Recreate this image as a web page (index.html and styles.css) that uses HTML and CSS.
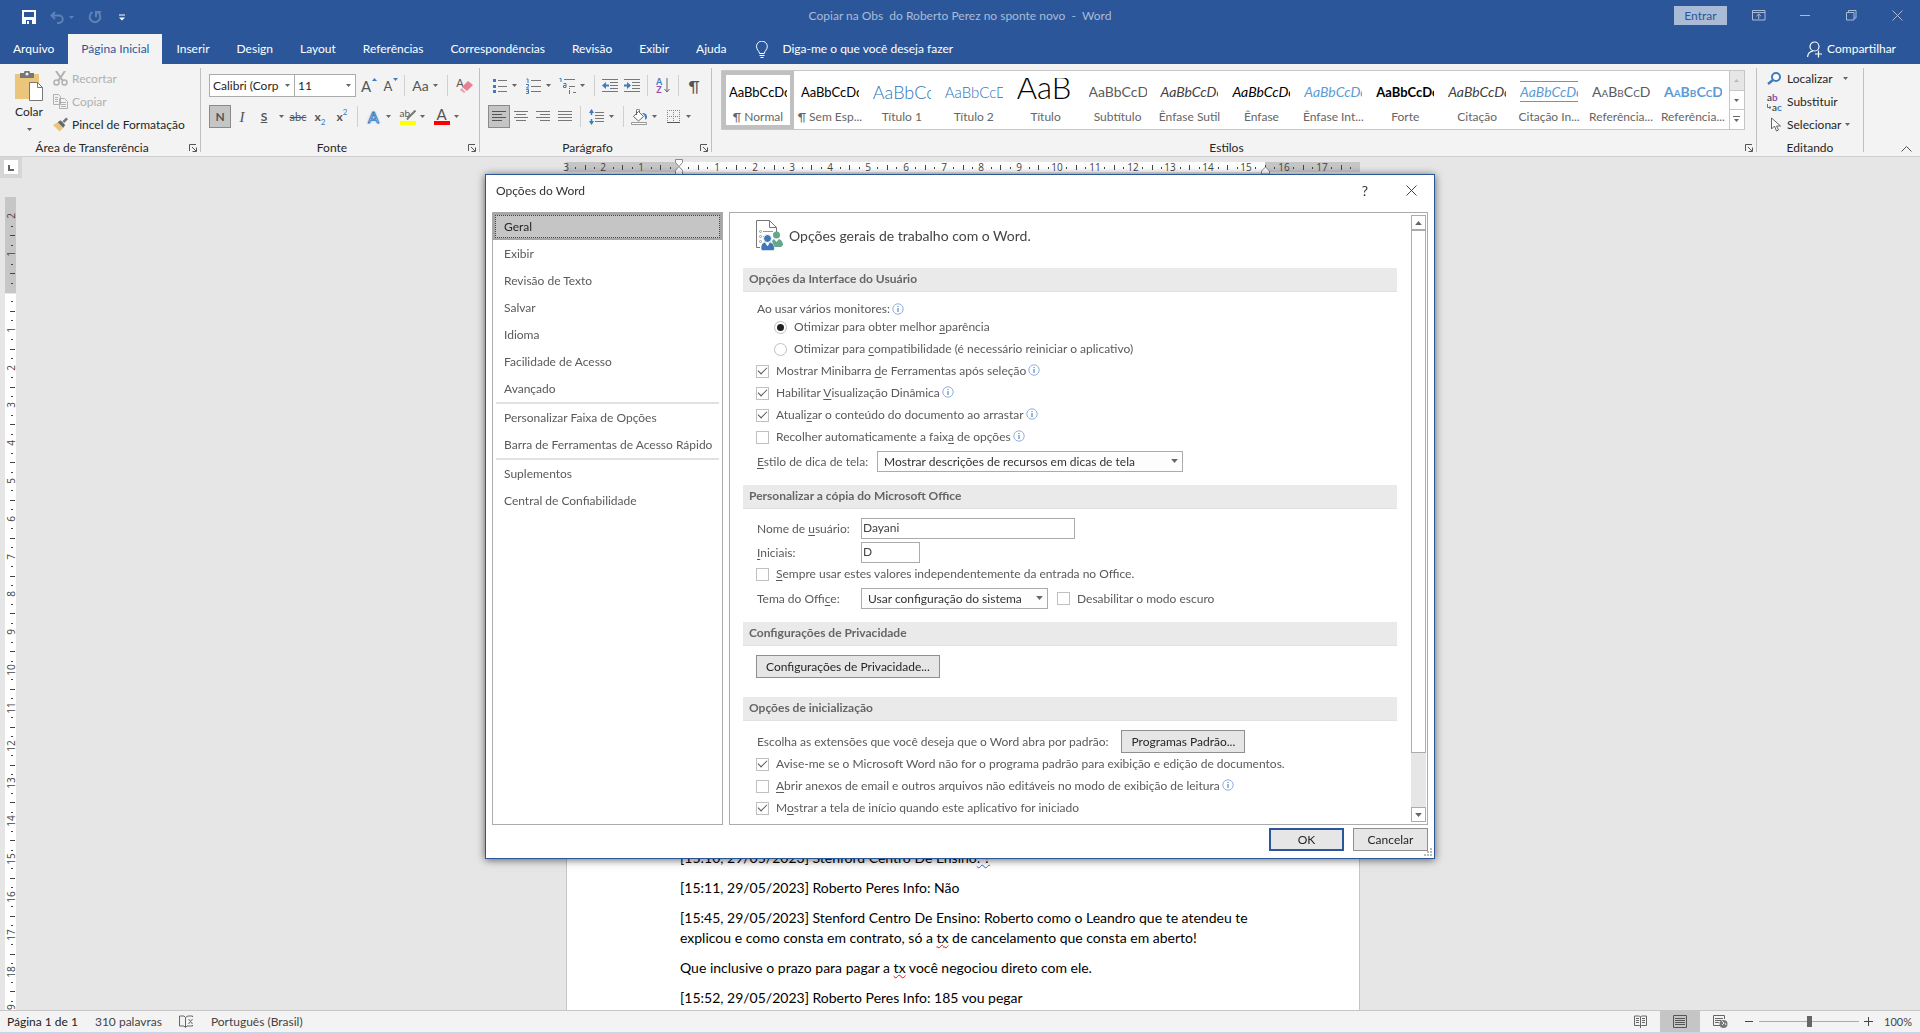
FILE: index.html
```html
<!DOCTYPE html>
<html lang="pt-BR">
<head>
  <meta charset="UTF-8">
  <meta name="viewport" content="width=device-width, initial-scale=1">
  <title>Copiar na Obs do Roberto Perez no sponte novo - Word</title>
  <link rel="stylesheet" href="styles.css">
</head>
<body>

<!-- símbolos reutilizados -->
<svg class="defs" aria-hidden="true">
  <symbol id="arrow" viewBox="0 0 5 3"><path d="M0 0h5L2.500 3z" fill="currentColor"/></symbol>
  <symbol id="info" viewBox="0 0 12 12"><circle cx="6" cy="6" r="5.200" fill="#fff" stroke="#8db0e0"/><path d="M6 5v4M6 3v1" stroke="#3a6fb5"/></symbol>
  <symbol id="launch" viewBox="0 0 8 8"><path d="M.5 7V.5H7M3 3l4 4M7.500 3.500v4h-4" fill="none" stroke="#555"/></symbol>
</svg>

<div class="app">
<header class="titlebar">
  <div class="quick">
    <button class="tb" aria-label="Salvar"><svg width="14" height="14" viewBox="0 0 14 14"><path d="M1 1h12v12H1z" fill="none" stroke="#fff" stroke-width="2"/><path d="M1 7h12v6H1z" fill="#fff"/><path d="M4 10h6v4H4z" fill="#2b579a"/><path d="M5 11h2v3H5z" fill="#fff"/></svg></button>
    <button class="split faded" aria-label="Desfazer"><svg width="14" height="13" viewBox="0 0 14 13"><path d="M5 1L1.500 4.500 5 8M2 4.500h7a3.500 3.500 0 0 1 0 7.500H7" fill="none" stroke="currentColor" stroke-width="2"/></svg><svg class="arr"><use href="#arrow"/></svg></button>
    <button class="tb faded" aria-label="Refazer"><svg width="14" height="14" viewBox="0 0 14 14"><path d="M4.500 2.200A5.300 5.300 0 1 0 9.500 2.200M8 7V2h5" fill="none" stroke="currentColor" stroke-width="2"/></svg></button>
    <button class="tb" aria-label="Personalizar barra"><svg width="6" height="7" viewBox="0 0 6 7"><path d="M0 1h6" stroke="#fff" /><path d="M0 3.500h6L3 6.500z" fill="#fff"/></svg></button>
  </div>
  <div class="doc-title">Copiar na Obs  do Roberto Perez no sponte novo  -  Word</div>
  <div class="window-buttons">
    <button class="signin">Entrar</button>
    <button class="win" aria-label="Opções de exibição da faixa"><svg width="14" height="11" viewBox="0 0 14 11"><path d="M.5.5h12.500v9.500H.5zM.5 2.500H13M6.750 9V4M4.500 6.200L6.750 4 9 6.200" fill="none" stroke="currentColor"/></svg></button>
    <button class="win" aria-label="Minimizar"><svg width="10" height="11" viewBox="0 0 10 11"><path d="M0 5.500h10" stroke="currentColor"/></svg></button>
    <button class="win" aria-label="Restaurar"><svg width="11" height="11" viewBox="0 0 11 11"><path d="M.5 2.500h7.500v7.500H.5zM2.500 2.500V.5H10v7.500H8" fill="none" stroke="currentColor"/></svg></button>
    <button class="win" aria-label="Fechar"><svg width="11" height="11" viewBox="0 0 11 11"><path d="M.5.5l10 10M10.500.5l-10 10" stroke="currentColor"/></svg></button>
  </div>
</header>

<nav class="tabs">
  <button>Arquivo</button>
  <button class="active">Página Inicial</button>
  <button>Inserir</button>
  <button>Design</button>
  <button>Layout</button>
  <button>Referências</button>
  <button>Correspondências</button>
  <button>Revisão</button>
  <button>Exibir</button>
  <button>Ajuda</button>
  <button class="tell"><svg width="12" height="17" viewBox="0 0 12 17"><path d="M3.500 12.500c0-2.500-3-3.500-3-7a5.300 5.300 0 0 1 10.800 0c0 3.500-3 4.500-3 7zM3.500 14.500h5M4.500 16.500h3" fill="none" stroke="#fff"/></svg>Diga-me o que você deseja fazer</button>
  <button class="share"><svg width="15" height="17" viewBox="0 0 15 17"><circle cx="7.500" cy="5.500" r="4.500" fill="none" stroke="#fff" stroke-width="1.200"/><path d="M.6 16C.8 12.500 3 10.500 6 10M11.500 9.500v7M8 13h7" fill="none" stroke="#fff" stroke-width="1.200"/></svg>Compartilhar</button>
</nav>

<section class="ribbon">
  <div class="group clipboard">
    <div class="controls">
      <button class="paste">
        <svg width="28" height="30" viewBox="0 0 28 30"><path d="M0 3h24v25H0z" fill="#ecc57c"/><path d="M5 2h4a3 3 0 0 1 6 0h4v5H5z" fill="#777"/><circle cx="12" cy="3" r="1.500" fill="#f3f3f3"/><path d="M14.500 11.500h8l5 5v13h-13z" fill="#fff" stroke="#777"/><path d="M22.500 11.500v5h5" fill="none" stroke="#777"/></svg>
        <span>Colar</span>
        <svg class="arr"><use href="#arrow"/></svg>
      </button>
      <div class="stack">
        <button class="row off"><svg width="15" height="15" viewBox="0 0 15 15"><path d="M3 0l7 10M12 0L5 10" stroke="#b1b1b1" stroke-width="2"/><circle cx="3.500" cy="11.500" r="2.500" fill="none" stroke="#b1b1b1" stroke-width="1.500"/><circle cx="11.500" cy="11.500" r="2.500" fill="none" stroke="#b1b1b1" stroke-width="1.500"/></svg>Recortar</button>
        <button class="row off"><svg width="15" height="15" viewBox="0 0 15 15"><path d="M.5.5h5l2 2v8h-7zM6.500 4.500h5l3 3v7h-8z" fill="#f3f3f3" stroke="#b1b1b1"/><path d="M2 3.500h3M2 5.500h3M2 7.500h3M8 8.500h5M8 10.500h5M8 12.500h5" stroke="#b1b1b1"/></svg>Copiar</button>
        <button class="row"><svg width="15" height="15" viewBox="0 0 16 15"><path d="M0 8l5-3 6 6-4 4z" fill="#ecc57c"/><path d="M5 5l3-2 5 5-2 3z" fill="#666"/><path d="M10 4l4-4 2 2-4 4z" fill="#777"/></svg>Pincel de Formatação</button>
      </div>
    </div>
    <div class="caption">Área de Transferência<button class="launcher" aria-label="Mais opções"><svg width="8" height="8"><use href="#launch"/></svg></button></div>
  </div>

  <div class="group font">
    <div class="controls column">
      <div class="line">
        <div class="combo"><select aria-label="Fonte"><option>Calibri (Corp</option></select><svg class="arr"><use href="#arrow"/></svg></div>
        <div class="combo size"><select aria-label="Tamanho"><option>11</option></select><svg class="arr"><use href="#arrow"/></svg></div>
        <button class="tb grow" aria-label="Aumentar fonte"><span>A</span><svg width="5" height="3" viewBox="0 0 5 3"><path d="M0 3h5L2.500 0z" fill="#3c7cbf"/></svg></button>
        <button class="tb grow less" aria-label="Diminuir fonte"><span>A</span><svg width="5" height="3" viewBox="0 0 5 3"><path d="M0 0h5L2.500 3z" fill="#3c7cbf"/></svg></button>
        <i class="sep"></i>
        <button class="split"><span class="aa">Aa</span><svg class="arr"><use href="#arrow"/></svg></button>
        <i class="sep"></i>
        <button class="tb eraser" aria-label="Limpar formatação"><span>A</span><svg width="13" height="12" viewBox="0 0 13 12"><path d="M8 0l5 4-6 6-5-4z" fill="#e8808f"/><path d="M1.500 7l4 4-1.500 1L0 9z" fill="#ef9fab"/></svg></button>
      </div>
      <div class="line">
        <button class="tb pressed"><b>N</b></button>
        <button class="tb serif"><em>I</em></button>
        <button class="tb ul"><b>S</b></button>
        <button class="drop" aria-label="Estilo de sublinhado"><svg class="arr"><use href="#arrow"/></svg></button>
        <button class="tb strike"><s>abc</s></button>
        <button class="tb script"><b>x</b><sub>2</sub></button>
        <button class="tb script"><b>x</b><sup>2</sup></button>
        <i class="sep"></i>
        <button class="split"><span class="glow">A</span><svg class="arr"><use href="#arrow"/></svg></button>
        <button class="split"><span class="mark">ab<svg width="10" height="10" viewBox="0 0 10 10"><path d="M9.500.5L3 7 1 9.500" stroke="#777" stroke-width="2" fill="none"/></svg></span><svg class="arr"><use href="#arrow"/></svg></button>
        <button class="split"><span class="color">A</span><svg class="arr"><use href="#arrow"/></svg></button>
      </div>
    </div>
    <div class="caption">Fonte<button class="launcher" aria-label="Mais opções"><svg width="8" height="8"><use href="#launch"/></svg></button></div>
  </div>

  <div class="group paragraph">
    <div class="controls column">
      <div class="line">
        <button class="split" aria-label="Marcadores"><svg width="14" height="15" viewBox="0 0 14 15"><path d="M5 2.500h9M5 8.500h9M5 13.500h9" stroke="#777"/><path d="M0 1h3v3H0zM0 7h3v3H0zM0 12h3v3H0z" fill="#3c7cbf"/></svg><svg class="arr"><use href="#arrow"/></svg></button>
        <button class="split" aria-label="Numeração"><svg width="15" height="16" viewBox="0 0 15 16"><path d="M5 2.500h10M5 8.500h10M5 13.500h10" stroke="#777"/><path d="M.5 1H2v4M0 6.500h2.500v1.500L.5 10h2.500M0 11.500h2.500v4H0M.5 13.500h2" stroke="#3c7cbf" fill="none"/></svg><svg class="arr"><use href="#arrow"/></svg></button>
        <button class="split" aria-label="Lista de vários níveis"><svg width="17" height="16" viewBox="0 0 17 16"><path d="M5 1.500h11M10 8.500h6M14 14.500h3" stroke="#777"/><path d="M.5.5H2V4M4.500 5.500H7v4H4.500V7.500H7M10.500 10v1M10.500 12v4" stroke="#3c7cbf" fill="none"/></svg><svg class="arr"><use href="#arrow"/></svg></button>
        <i class="sep"></i>
        <button class="tb" aria-label="Diminuir recuo"><svg width="16" height="14" viewBox="0 0 16 14"><path d="M0 .5h16M8 3.500h8M8 6.500h8M8 9.500h8M0 12.500h16" stroke="#777"/><path d="M7 6.500H2" stroke="#3c7cbf" stroke-width="2"/><path d="M0 6.500L4 3v7z" fill="#3c7cbf"/></svg></button>
        <button class="tb" aria-label="Aumentar recuo"><svg width="16" height="14" viewBox="0 0 16 14"><path d="M0 .5h16M8 3.500h8M8 6.500h8M8 9.500h8M0 12.500h16" stroke="#777"/><path d="M0 6.500h5" stroke="#3c7cbf" stroke-width="2"/><path d="M7 6.500L3 3v7z" fill="#3c7cbf"/></svg></button>
        <i class="sep"></i>
        <button class="tb sort" aria-label="Classificar"><span>A<i>Z</i></span><svg width="6" height="15" viewBox="0 0 6 15"><path d="M3 0v14M.5 11L3 14l2.500-3" stroke="#666" fill="none"/></svg></button>
        <i class="sep"></i>
        <button class="tb pilcrow">¶</button>
      </div>
      <div class="line">
        <button class="tb pressed" aria-label="Alinhar à esquerda"><svg width="14" height="12" viewBox="0 0 14 12"><path d="M0 .5h14M0 3.500h10M0 6.500h14M0 9.500h10" stroke="#555"/></svg></button>
        <button class="tb" aria-label="Centralizar"><svg width="14" height="12" viewBox="0 0 14 12"><path d="M0 .5h14M2 3.500h10M0 6.500h14M2 9.500h10" stroke="#777"/></svg></button>
        <button class="tb" aria-label="Alinhar à direita"><svg width="14" height="12" viewBox="0 0 14 12"><path d="M0 .5h14M4 3.500h10M0 6.500h14M4 9.500h10" stroke="#777"/></svg></button>
        <button class="tb" aria-label="Justificar"><svg width="14" height="12" viewBox="0 0 14 12"><path d="M0 .5h14M0 3.500h14M0 6.500h14M0 9.500h14" stroke="#777"/></svg></button>
        <i class="sep"></i>
        <button class="split" aria-label="Espaçamento"><svg width="15" height="16" viewBox="0 0 15 16"><path d="M6 3.500h9M6 6.500h9M6 9.500h9M6 12.500h9" stroke="#777"/><path d="M2.500 1v5M2.500 10v5" stroke="#3c7cbf" stroke-width="1.500"/><path d="M0 4l2.500-4L5 4zM0 12l2.500 4L5 12z" fill="#3c7cbf"/></svg><svg class="arr"><use href="#arrow"/></svg></button>
        <i class="sep"></i>
        <button class="split" aria-label="Sombreamento"><svg width="17" height="16" viewBox="0 0 17 16"><path d="M2.500 7.500l5-5 5 5-5 4.500zM5.500 6V1.500a1 1 0 0 1 3 0V4" fill="#fff" stroke="#666"/><path d="M11 4c3 0 5 1 5 4 0 2-2 4-2 1s-1-3-3-5z" fill="#3c7cbf"/><path d="M.5 13.500h15v2H.5z" fill="#fff" stroke="#999"/></svg><svg class="arr"><use href="#arrow"/></svg></button>
        <button class="split" aria-label="Bordas"><svg width="13" height="14" viewBox="0 0 13 14"><path d="M.5 0v12M6.500 0v12M12.500 0v12M0 .5h13M0 6.500h13" stroke="#888" stroke-dasharray="1 1"/><path d="M0 12.500h13" stroke="#555"/></svg><svg class="arr"><use href="#arrow"/></svg></button>
      </div>
    </div>
    <div class="caption">Parágrafo<button class="launcher" aria-label="Mais opções"><svg width="8" height="8"><use href="#launch"/></svg></button></div>
  </div>

  <div class="group styles">
    <div class="gallery">
      <button class="style selected"><span class="sample">AaBbCcDc</span><span>¶ Normal</span></button>
      <button class="style"><span class="sample">AaBbCcDc</span><span>¶ Sem Esp...</span></button>
      <button class="style"><span class="sample h1">AaBbCc</span><span>Título 1</span></button>
      <button class="style"><span class="sample h2">AaBbCcD</span><span>Título 2</span></button>
      <button class="style"><span class="sample title">AaB</span><span>Título</span></button>
      <button class="style"><span class="sample subtitle">AaBbCcD</span><span>Subtítulo</span></button>
      <button class="style"><span class="sample subtle">AaBbCcDc</span><span>Ênfase Sutil</span></button>
      <button class="style"><span class="sample italic">AaBbCcDc</span><span>Ênfase</span></button>
      <button class="style"><span class="sample italic accent">AaBbCcDc</span><span>Ênfase Int...</span></button>
      <button class="style"><span class="sample strong">AaBbCcDc</span><span>Forte</span></button>
      <button class="style"><span class="sample subtle">AaBbCcDc</span><span>Citação</span></button>
      <button class="style"><span class="sample italic accent ruled">AaBbCcDc</span><span>Citação In...</span></button>
      <button class="style"><span class="sample caps">AaBbCcDd</span><span>Referência...</span></button>
      <button class="style"><span class="sample caps accent strong">AaBbCcDd</span><span>Referência...</span></button>
      <div class="gallery-nav">
        <button disabled aria-label="Anterior"><svg class="arr up"><use href="#arrow"/></svg></button>
        <button aria-label="Próxima"><svg class="arr"><use href="#arrow"/></svg></button>
        <button aria-label="Mais"><svg width="7" height="7" viewBox="0 0 7 7"><path d="M0 .5h7" stroke="#666"/><path d="M1 3h5L3.500 6z" fill="#666"/></svg></button>
      </div>
    </div>
    <div class="caption">Estilos<button class="launcher" aria-label="Mais opções"><svg width="8" height="8"><use href="#launch"/></svg></button></div>
  </div>

  <div class="group editing">
    <div class="stack">
      <button class="row"><svg width="16" height="13" viewBox="0 0 16 13"><circle cx="9" cy="5" r="4" fill="#fff" stroke="#3c7cbf" stroke-width="2"/><path d="M6 8l-5 4" stroke="#3c7cbf" stroke-width="2.500"/></svg>Localizar<svg class="arr far"><use href="#arrow"/></svg></button>
      <button class="row"><span class="swap"><i>a<b>b</b></i><i class="to"><svg width="4" height="5" viewBox="0 0 4 5"><path d="M.5 0v3.500H4M2.500 2L4 3.500 2.500 5" fill="none" stroke="#3c7cbf"/></svg>a<u>c</u></i></span>Substituir</button>
      <button class="row"><svg width="16" height="15" viewBox="0 0 16 15"><path d="M4.500 1v11l3-3 2 5 2-1-2-4h4z" fill="#fff" stroke="#666"/></svg>Selecionar<svg class="arr"><use href="#arrow"/></svg></button>
    </div>
    <div class="caption">Editando</div>
  </div>
  <button class="collapse" aria-label="Recolher a faixa"><svg width="11" height="6" viewBox="0 0 11 6"><path d="M.5 5.500l5-5 5 5" fill="none" stroke="#555"/></svg></button>
</section>

<main class="workspace">
  <div class="side">
    <div class="tabstop"><svg width="14" height="14" viewBox="0 0 14 14"><path d="M0 0h14v14H0z" fill="#fff"/><path d="M5 5v5h5" fill="none" stroke="#666" stroke-width="2"/></svg></div>
    <svg class="vruler" id="vruler"></svg>
  </div>
  <div class="canvas">
    <svg class="hruler" id="hruler"></svg>
    <article class="page">
      <p>[15:10, 29/05/2023] Stenford Centro De Ensino<span class="grammar">: ?</span></p>
      <p>[15:11, 29/05/2023] Roberto Peres Info: Não</p>
      <p>[15:45, 29/05/2023] Stenford Centro De Ensino: Roberto como o Leandro que te atendeu te<br>explicou e como consta em contrato, só a <span class="spell">tx</span> de cancelamento que consta em aberto!</p>
      <p>Que inclusive o prazo para pagar a <span class="spell">tx</span> você negociou direto com ele.</p>
      <p>[15:52, 29/05/2023] Roberto Peres Info: 185 vou pegar</p>
    </article>
  </div>
</main>

<footer class="status">
  <span class="pages">Página 1 de 1</span>
  <span>310 palavras</span>
  <svg width="15" height="13" viewBox="0 0 15 13"><path d="M8 1.500L6.500 2.500 5 1H.5v10H5l1.500 1.500L8 11h5.500v-1M6.500 2.500v10M8 1.500L9 1h4.500v1M9.500 4l4 5M13.500 4l-4 5" fill="none" stroke="#666"/></svg>
  <span>Português (Brasil)</span>
  <div class="views">
    <button aria-label="Modo de leitura"><svg width="13" height="13" viewBox="0 0 13 13"><path d="M6.500 2L5.500 1H.5v9.500h5l1 1 1-1h5V1h-5zM6.500 2v11" fill="none" stroke="#666"/><path d="M2 3.500h3M2 5.500h3M2 7.500h3M8 3.500h3M8 5.500h3M8 7.500h3" stroke="#666"/></svg></button>
    <button class="on" aria-label="Layout de impressão"><svg width="14" height="13" viewBox="0 0 14 13"><path d="M.5.5h13v12H.5zM2 3.500h10M2 5.500h10M2 7.500h10M2 9.500h10" fill="none" stroke="#555"/></svg></button>
    <button aria-label="Layout da Web"><svg width="15" height="14" viewBox="0 0 15 14"><path d="M7 10.500H.5V.5h11V4M2 3.500h8M2 5.500h6M2 7.500h4" fill="none" stroke="#666"/><circle cx="10.500" cy="9" r="4" fill="#777"/><path d="M9 6l2 2-2 2M12 8l1 2" stroke="#eee" fill="none"/></svg></button>
  </div>
  <div class="zoom">
    <button aria-label="Reduzir"><svg width="9" height="9" viewBox="0 0 9 9"><path d="M0 4.500h8" stroke="#444"/></svg></button>
    <input type="range" min="0" max="100" value="50" aria-label="Zoom">
    <button aria-label="Ampliar"><svg width="9" height="9" viewBox="0 0 9 9"><path d="M0 4.500h9M4.500 0v9" stroke="#444"/></svg></button>
    <span>100%</span>
  </div>
</footer>
</div>

<div class="overlay">
<form class="dialog" role="dialog" aria-labelledby="dlg-title">
  <div class="dialog-title">
    <span id="dlg-title">Opções do Word</span>
    <button type="button" class="help">?</button>
    <button type="button" aria-label="Fechar"><svg width="11" height="11" viewBox="0 0 11 11"><path d="M.5.5l10 10M10.500.5l-10 10" stroke="#444"/></svg></button>
  </div>
  <div class="panes">
    <nav class="categories">
      <a href="#" class="current"><span>Geral</span></a>
      <a href="#">Exibir</a>
      <a href="#">Revisão de Texto</a>
      <a href="#">Salvar</a>
      <a href="#">Idioma</a>
      <a href="#">Facilidade de Acesso</a>
      <a href="#">Avançado</a>
      <hr>
      <a href="#">Personalizar Faixa de Opções</a>
      <a href="#">Barra de Ferramentas de Acesso Rápido</a>
      <hr>
      <a href="#">Suplementos</a>
      <a href="#">Central de Confiabilidade</a>
    </nav>
    <div class="content">
      <div class="options">
        <div class="intro">
          <svg width="28" height="31" viewBox="0 0 28 31"><path d="M4 27.500H.5V.5h13l7 7V12M13.500.5v7h7" fill="none" stroke="#777"/><g fill="none" stroke="#999"><circle cx="4.500" cy="11.500" r="1"/><circle cx="4.500" cy="16.500" r="1"/><circle cx="4.500" cy="21.500" r="1"/><path d="M7 11.500h10M7 16.500h2"/></g><circle cx="20.500" cy="15" r="3.500" fill="#67a58c"/><path d="M16 21l2-2 2.500 3 2.500-3c3 1 4 4 4 6l-2 2h-7z" fill="#67a58c"/><circle cx="11.500" cy="18.500" r="4" fill="#3f78b5" stroke="#fff"/><path d="M5 29c0-4 1-6 4-7l2.500 4 2.500-4c3 1 4.500 3 4.500 7l-1 1.500H6z" fill="#3f78b5" stroke="#fff" stroke-width=".5"/></svg>
          <span>Opções gerais de trabalho com o Word.</span>
        </div>

        <h3>Opções da Interface do Usuário</h3>
        <div class="body">
          <div class="first">Ao usar vários monitores:<svg class="info"><use href="#info"/></svg></div>
          <label class="check indent"><input type="radio" name="monitor" checked><span>Otimizar para obter melhor <u>a</u>parência</span></label>
          <label class="check indent"><input type="radio" name="monitor"><span>Otimizar para <u>c</u>ompatibilidade (é necessário reiniciar o aplicativo)</span></label>
          <label class="check"><input type="checkbox" checked><span>Mostrar Minibarra <u>d</u>e Ferramentas após seleção</span><svg class="info"><use href="#info"/></svg></label>
          <label class="check"><input type="checkbox" checked><span>Habilitar <u>V</u>isualização Dinâmica</span><svg class="info"><use href="#info"/></svg></label>
          <label class="check"><input type="checkbox" checked><span>Atuali<u>z</u>ar o conteúdo do documento ao arrastar</span><svg class="info"><use href="#info"/></svg></label>
          <label class="check"><input type="checkbox"><span>Recolher automaticamente a faix<u>a</u> de opções</span><svg class="info"><use href="#info"/></svg></label>
          <div class="field wide">
            <label for="tip"><u>E</u>stilo de dica de tela:</label>
            <div class="select tip"><select id="tip"><option>Mostrar descrições de recursos em dicas de tela</option></select><svg class="arr"><use href="#arrow"/></svg></div>
          </div>
        </div>

        <h3>Personalizar a cópia do Microsoft Office</h3>
        <div class="body">
          <div class="field"><label for="user">Nome de <u>u</u>suário:</label><input type="text" id="user" value="Dayani"></div>
          <div class="field"><label for="initials"><u>I</u>niciais:</label><input type="text" id="initials" class="short" value="D"></div>
          <label class="check"><input type="checkbox"><span><u>S</u>empre usar estes valores independentemente da entrada no Office.</span></label>
          <div class="field">
            <label for="theme">Tema do Offi<u>c</u>e:</label>
            <div class="select theme"><select id="theme"><option>Usar configuração do sistema</option></select><svg class="arr"><use href="#arrow"/></svg></div>
            <label class="check"><input type="checkbox"><span>Desabilitar o modo escuro</span></label>
          </div>
        </div>

        <h3>Configurações de Privacidade</h3>
        <div class="body roomy">
          <button type="button" class="btn">Configurações de Privacidade...</button>
        </div>

        <h3>Opções de inicialização</h3>
        <div class="body">
          <div class="defaults"><span>Escolha as extensões que você deseja que o Word abra por padrão:</span><button type="button" class="btn">Programas Padrão...</button></div>
          <label class="check"><input type="checkbox" checked><span>Avise-me se o Microsoft Word não for o programa padrão para exibição e edição de documentos.</span></label>
          <label class="check"><input type="checkbox"><span><u>A</u>brir anexos de email e outros arquivos não editáveis no modo de exibição de leitura</span><svg class="info"><use href="#info"/></svg></label>
          <label class="check"><input type="checkbox" checked><span>M<u>o</u>strar a tela de início quando este aplicativo for iniciado</span></label>
        </div>
      </div>
      <div class="scrollbar">
        <button type="button" aria-label="Rolar para cima"><svg class="arr up"><use href="#arrow"/></svg></button>
        <div class="thumb"></div>
        <button type="button" aria-label="Rolar para baixo"><svg class="arr"><use href="#arrow"/></svg></button>
      </div>
    </div>
  </div>
  <div class="actions">
    <button type="button" class="btn primary">OK</button>
    <button type="button" class="btn">Cancelar</button>
  </div>
  <svg class="grip" width="8" height="8" viewBox="0 0 8 8"><path d="M6 0h2v2H6zM3 3h2v2H3zM6 3h2v2H6zM0 6h2v2H0zM3 6h2v2H3zM6 6h2v2H6z" fill="#bbb"/></svg>
</form>
</div>

<script src="rulers.js"></script>
</body>
</html>
```
FILE: styles.css
```css
* {
  box-sizing: border-box;
}
body {
  margin: 0;
  font-family: Lato, "Open Sans", sans-serif;
  font-size: 12px;
  line-height: 16px;
  color: #262626;
}
button, input, select {
  font: inherit;
  color: inherit;
  margin: 0;
  padding: 0;
  border: 0;
  background: none;
}
svg {
  display: block;
  flex: none;
}
.defs {
  position: absolute;
  width: 0;
  height: 0;
}
.arr {
  width: 5px;
  height: 3px;
  color: #666;
}
.arr.up {
  transform: rotate(180deg);
}
.app {
  height: 100vh;
  display: flex;
  flex-direction: column;
  overflow: hidden;
  background: #e6e6e6;
}

/* barra de título */
.titlebar {
  height: 34px;
  display: grid;
  grid-template-columns: 1fr auto 1fr;
  background: #2b579a;
  color: #a9bbd7;
}
.quick {
  display: flex;
  align-items: center;
  gap: 5px;
  padding-left: 18px;
}
.quick .faded, .quick .faded .arr {
  color: #5f82b6;
}
.doc-title {
  white-space: pre;
  line-height: 32px;
}
.window-buttons {
  display: flex;
  justify-content: flex-end;
}
.win {
  width: 46px;
  height: 30px;
  display: flex;
  align-items: center;
  justify-content: center;
}
.signin {
  width: 53px;
  height: 19px;
  margin: 6px 9px 0 0;
  background: #a9bbd7;
  color: #2b579a;
}

/* guias */
.tabs {
  height: 30px;
  display: flex;
  gap: 1px;
  background: #2b579a;
}
.tabs button {
  padding: 0 13px;
  color: #fff;
  display: flex;
  align-items: center;
  gap: 14px;
}
.tabs .active {
  background: #f3f3f3;
  color: #2b579a;
}
.tabs .tell {
  padding-left: 16px;
}
.tabs .share {
  margin-left: auto;
  padding-right: 24px;
  gap: 5px;
}

/* faixa de opções */
.ribbon {
  height: 93px;
  display: flex;
  padding-top: 4px;
  background: #f3f3f3;
  border-bottom: 1px solid #d0d0d0;
}
.group {
  height: 84px;
  display: flex;
  flex-direction: column;
  justify-content: space-between;
  border-right: 1px solid #c0c0c0;
}
.clipboard {
  width: 201px;
}
.font {
  width: 279px;
  padding-left: 8px;
}
.paragraph {
  width: 232px;
  padding-left: 8px;
}
.styles {
  flex: 1;
  min-width: 0;
  padding-left: 9px;
}
.editing {
  width: 107px;
}
.controls {
  display: flex;
}
.controls.column {
  flex-direction: column;
  gap: 8px;
  padding-top: 6px;
}
.line {
  display: flex;
  align-items: center;
  height: 23px;
}
.caption {
  height: 17px;
  margin-bottom: -4px;
  padding-right: 24px;
  display: flex;
  align-items: center;
  justify-content: center;
  position: relative;
}
.clipboard .caption {
  padding-right: 16px;
}
.editing .caption {
  padding-right: 0;
}
.launcher {
  position: absolute;
  right: 3px;
  top: 5px;
}
.stack {
  display: flex;
  flex-direction: column;
  margin-top: -1px;
}
.row {
  height: 23px;
  display: flex;
  align-items: center;
  gap: 4px;
  white-space: nowrap;
}
.row.off {
  color: #b1b1b1;
}
.paste {
  width: 40px;
  margin: 3px 4px 0 9px;
  display: flex;
  flex-direction: column;
  align-items: center;
  gap: 3px;
}
.paste .arr {
  margin-top: 5px;
}
.tb, .split, .drop {
  height: 23px;
  display: flex;
  align-items: center;
  justify-content: center;
  color: #555;
}
.tb {
  width: 22px;
}
.drop {
  width: 12px;
}
.split {
  width: 34px;
  padding-right: 3px;
  display: grid;
  grid-template-columns: 22px 8px;
  justify-items: center;
}
.pressed {
  background: #c5c5c5;
  border: 1px solid #8a8a8a;
}
.sep {
  width: 1px;
  height: 21px;
  margin: 0 4px;
  background: #d0d0d0;
}
.combo {
  position: relative;
  width: 86px;
  height: 23px;
  border: 1px solid #ababab;
  background: #fff;
}
.combo.size {
  width: 62px;
  margin-left: -1px;
}
.combo select, .select select {
  appearance: none;
  width: 100%;
  height: 100%;
  padding-left: 3px;
}
.combo .arr, .select .arr {
  position: absolute;
  right: 4px;
  top: 9px;
  pointer-events: none;
}
.grow {
  gap: 1px;
  padding-left: 4px;
  font-size: 15px;
}
.grow svg {
  margin-bottom: 12px;
}
.grow.less {
  font-size: 13px;
}
.aa {
  font-size: 14px;
}
.eraser {
  position: relative;
  font-size: 11px;
}
.eraser span {
  margin: -6px 6px 0 0;
}
.eraser svg {
  position: absolute;
  left: 8px;
  top: 7px;
}
.serif {
  font-family: "Liberation Serif", serif;
  font-size: 15px;
}
.ul {
  text-decoration: underline;
}
.strike {
  font-size: 11px;
}
.script sub, .script sup {
  font-size: 8px;
  line-height: 8px;
  color: #3c7cbf;
}
.script sub {
  margin-top: 10px;
}
.script sup {
  margin-bottom: 10px;
}
.glow {
  font-size: 16px;
  color: #fff;
  -webkit-text-stroke: 1px #3c7cbf;
  text-shadow: 0 0 3px #7fb2e5;
}
.mark {
  width: 16px;
  height: 17px;
  display: flex;
  font-size: 10px;
  line-height: 10px;
  border-bottom: 4px solid #ff0;
}
.mark svg {
  margin: 2px 0 0 -4px;
}
.color {
  width: 16px;
  height: 17px;
  font-size: 15px;
  line-height: 13px;
  border-bottom: 4px solid #f00;
}
.sort {
  gap: 2px;
}
.sort span {
  font-size: 9px;
  line-height: 8px;
  font-weight: bold;
  width: 6px;
  color: #3c7cbf;
}
.sort i {
  display: block;
  font-style: normal;
  color: #8e4fb0;
}
.pilcrow {
  font-size: 16px;
}
.gallery {
  height: 60px;
  margin: 2px 11px 0 0;
  display: flex;
  background: #fff;
  border: 1px solid #c6c6c6;
  overflow: hidden;
}
.style {
  flex: 1;
  min-width: 0;
  display: flex;
  flex-direction: column;
  align-items: center;
  justify-content: space-between;
  padding: 7px 0 4px;
  color: #666;
  white-space: nowrap;
}
.style.selected {
  outline: 4px solid #c0c0c0;
  outline-offset: -4px;
}
.sample {
  width: 58px;
  height: 24px;
  overflow: hidden;
  text-align: left;
  font-size: 13px;
  line-height: 28px;
  color: #000;
}
.h1, .h2 {
  font-weight: 300;
  color: #2e74b5;
}
.h1 {
  font-size: 18px;
}
.h2 {
  font-size: 15px;
}
.title {
  font-size: 31px;
  font-weight: 300;
  line-height: 18px;
}
.subtitle {
  font-size: 14px;
  color: #5a5a5a;
}
.subtle {
  font-size: 14px;
  color: #404040;
  font-style: italic;
}
.italic {
  font-size: 14px;
  font-style: italic;
}
.caps {
  font-size: 14px;
  color: #5a5a5a;
  font-variant: small-caps;
}
.accent {
  color: #5b9bd5;
}
.strong {
  font-weight: bold;
}
.ruled {
  height: 21px;
  line-height: 19px;
  margin-top: 3px;
  border-top: 1px solid #5b9bd5;
  border-bottom: 1px solid #5b9bd5;
}
.gallery-nav {
  width: 15px;
  display: flex;
  flex-direction: column;
  border-left: 1px solid #c6c6c6;
}
.gallery-nav button {
  flex: 1;
  display: flex;
  align-items: center;
  justify-content: center;
}
.gallery-nav button + button {
  border-top: 1px solid #c6c6c6;
}
.gallery-nav button:disabled {
  background: #e6e6e6;
}
.gallery-nav button:disabled .arr {
  color: #bbb;
}
.editing .row {
  padding-left: 10px;
}
.editing .far {
  margin-left: 6px;
}
.swap {
  width: 16px;
  font-size: 10px;
  line-height: 10px;
  display: flex;
  flex-direction: column;
  align-items: flex-start;
}
.swap i {
  font-style: normal;
}
.swap .to {
  display: flex;
  align-items: center;
  gap: 1px;
}
.swap b {
  color: #8e4fb0;
}
.swap u {
  margin-left: -1px;
  color: #3c7cbf;
  font-weight: bold;
  text-decoration: none;
}
.collapse {
  width: 56px;
  display: flex;
  align-items: flex-end;
  justify-content: flex-end;
  padding: 0 8px 4px 0;
}

/* área do documento */
.workspace {
  flex: 1;
  min-height: 0;
  display: flex;
}
.side {
  width: 22px;
  display: flex;
  flex-direction: column;
}
.tabstop {
  height: 21px;
  padding: 3px 4px;
  background: #d6d6d6;
}
.vruler {
  flex: 1;
  width: 11px;
  min-height: 0;
  margin: 19px 0 0 5px;
}
.canvas {
  flex: 1;
  display: flex;
  flex-direction: column;
  align-items: center;
  padding: 2px 16px 0 0;
  min-height: 0;
}
.hruler {
  width: 794px;
  height: 17px;
  overflow: visible;
}
.hruler text, .vruler text {
  font-family: "Open Sans", sans-serif;
  font-size: 10px;
  text-anchor: middle;
  fill: #444;
}
.page {
  flex: 1;
  min-height: 0;
  width: 794px;
  margin-top: 21px;
  padding: 0 113px;
  display: flex;
  flex-direction: column;
  justify-content: flex-end;
  background: #fff;
  border: 1px solid #c6c6c6;
  border-bottom: 0;
  font-size: 14px;
  line-height: 20px;
  color: #000;
  white-space: nowrap;
}
.page p {
  margin: 10px 0 0;
}
.page p:last-child {
  margin-bottom: 2px;
}
.spell {
  text-decoration: underline wavy #f00 1px;
}
.grammar {
  text-decoration: underline wavy #2a6fdb 1px;
}

/* barra de status */
.status {
  height: 23px;
  display: flex;
  align-items: center;
  gap: 17px;
  padding-left: 7px;
  background: #f3f3f3;
  border-top: 1px solid #c6c6c6;
  border-bottom: 1px solid #c9d7ec;
  color: #444;
}
.status .pages {
  color: #222;
}
.views {
  margin-left: auto;
  display: flex;
  align-self: stretch;
}
.views button {
  width: 40px;
  display: flex;
  align-items: center;
  justify-content: center;
}
.views .on {
  background: #c5c5c5;
}
.zoom {
  display: flex;
  align-items: center;
  gap: 5px;
  margin-left: -12px;
  padding-right: 8px;
}
.zoom span {
  margin-left: 6px;
  font-size: 11px;
}
.zoom input {
  appearance: none;
  width: 100px;
  height: 11px;
  background: linear-gradient(#ababab, #ababab) center / 100% 1px no-repeat;
}
.zoom input::-webkit-slider-thumb {
  appearance: none;
  width: 5px;
  height: 11px;
  background: #666;
}

/* caixa de diálogo */
.overlay {
  position: fixed;
  inset: 0;
  display: flex;
  align-items: center;
  justify-content: center;
}
.dialog {
  position: relative;
  width: 950px;
  padding: 0 6px 7px;
  background: #fff;
  border: 1px solid #2b579a;
  box-shadow: 0 1px 8px rgba(0, 0, 0, 0.6);
  color: #5a5a5a;
}
.dialog u {
  text-underline-offset: 2px;
}
.dialog-title {
  height: 37px;
  display: flex;
  align-items: center;
  padding: 0 4px 6px;
  color: #333;
}
.dialog-title button {
  width: 46px;
  height: 28px;
  display: flex;
  align-items: center;
  justify-content: center;
}
.dialog-title .help {
  margin-left: auto;
  font-size: 14px;
}
.dialog-title button:last-child {
  margin-right: -10px;
}
.panes {
  display: flex;
  gap: 6px;
}
.categories {
  width: 231px;
  border: 1px solid #ababab;
}
.categories a {
  display: block;
  height: 27px;
  padding-left: 11px;
  line-height: 27px;
  color: inherit;
  text-decoration: none;
  white-space: nowrap;
}
.categories .current {
  padding: 2px;
  background: #c5c5c5;
  box-shadow: inset 0 0 0 2px #a6a6a6;
  color: #262626;
}
.current span {
  display: block;
  height: 23px;
  padding-left: 8px;
  line-height: 21px;
  border: 1px dotted #444;
}
.categories hr {
  height: 2px;
  margin: 0 3px;
  border: 0;
  background: #e1e1e4;
}
.content {
  flex: 1;
  display: flex;
  justify-content: space-between;
  padding-right: 1px;
  border: 1px solid #ababab;
}
.options {
  flex: 1;
  padding: 0 14px 5px 13px;
}
.intro {
  height: 55px;
  display: flex;
  align-items: flex-start;
  gap: 5px;
  padding: 7px 0 0 13px;
  font-size: 14px;
  line-height: 32px;
  color: #444;
}
.options h3 {
  height: 24px;
  margin: 0;
  padding-left: 6px;
  font-size: 12px;
  line-height: 22px;
  color: #666;
  background: #eaeaea;
  border-bottom: 1px solid #e1e1e1;
}
.body {
  padding: 9px 0 13px 13px;
}
.body.roomy {
  padding-bottom: 19px;
}
.body:last-child {
  padding-bottom: 0;
}
.first {
  display: flex;
  align-items: center;
  gap: 2px;
  height: 15px;
  padding-left: 1px;
}
.info {
  width: 12px;
  height: 12px;
}
.check {
  height: 22px;
  display: flex;
  align-items: center;
}
.check input {
  appearance: none;
  width: 13px;
  height: 13px;
  margin-right: 7px;
  display: grid;
  place-items: center;
  background: #fff;
  border: 1px solid #c0c0c0;
}
.check input[type="checkbox"]:checked::before {
  content: "";
  width: 8px;
  height: 4px;
  margin-bottom: 3px;
  border: solid #555;
  border-width: 0 0 1px 1px;
  transform: rotate(-45deg);
}
.check input[type="radio"] {
  border-radius: 50%;
}
.check input[type="radio"]:checked::before {
  content: "";
  width: 7px;
  height: 7px;
  border-radius: 50%;
  background: #222;
}
.check .info {
  margin: 0 0 2px 2px;
}
.check.indent {
  padding-left: 18px;
}
.field {
  display: flex;
  align-items: center;
  height: 21px;
}
.field + .field, .check + .field {
  margin-top: 3px;
}
.field > label:first-child {
  width: 105px;
  padding-left: 1px;
}
.field.wide > label:first-child {
  width: 121px;
}
.field input[type="text"] {
  width: 214px;
  height: 21px;
  padding: 0 1px 2px;
  border: 1px solid #ababab;
  color: #444;
}
.field input.short {
  width: 59px;
}
.field .check {
  margin-left: 9px;
}
.select {
  position: relative;
  height: 21px;
  border: 1px solid #ababab;
  background: #fdfdfd;
  color: #333;
}
.select select {
  padding-left: 6px;
}
.select .arr {
  width: 7px;
  height: 4px;
  top: 7px;
}
.tip {
  width: 306px;
}
.theme {
  width: 187px;
}
.btn {
  min-width: 75px;
  height: 23px;
  padding: 0 9px;
  background: #e6e6e6;
  border: 1px solid #8f8f8f;
  color: #262626;
}
.btn.primary {
  border: 2px solid #2b579a;
}
.defaults {
  display: flex;
  align-items: center;
  gap: 13px;
  padding-left: 1px;
}
.scrollbar {
  width: 15px;
  margin: 2px 0;
  display: flex;
  flex-direction: column;
  background: #e6e6e6;
}
.scrollbar button {
  height: 15px;
  display: flex;
  align-items: center;
  justify-content: center;
  background: #fff;
  border: 1px solid #ababab;
}
.scrollbar .arr {
  width: 7px;
  height: 4px;
}
.scrollbar .thumb {
  height: 523px;
  background: #fff;
  border: 1px solid #ababab;
}
.scrollbar button:last-child {
  margin-top: auto;
}
.actions {
  display: flex;
  justify-content: flex-end;
  gap: 9px;
  padding-top: 3px;
}
.grip {
  position: absolute;
  right: 2px;
  bottom: 2px;
}
```
FILE: rulers.js
```js
// 1 cm na tela a 96 dpi
const CM = 37.8;

function quarterMarks(fromCm, toCm, draw) {
  for (let q = Math.ceil(fromCm * 4); q <= toCm * 4; q++) {
    if (q !== 0) draw(q * CM / 4, q);
  }
}

function horizontalRuler() {
  const zero = 113;
  let out = `<rect x="0" y="3" width="794" height="10" fill="#c6c6c6"/>
    <rect x="112" y="3" width="587" height="10" fill="#fff"/>`;
  quarterMarks(-3, 17.9, (pos, q) => {
    const x = Math.round(zero + pos);
    if (q % 4 === 0) out += `<text x="${x}" y="12">${Math.abs(q / 4)}</text>`;
    else if (q % 2 === 0) out += `<path d="M${x}.5 6v5" stroke="#444"/>`;
    else out += `<path d="M${x}.5 8v2" stroke="#444"/>`;
  });
  out += `<path d="M109.500.5h7v3l-3.500 4 3.500 4v4h-7v-4l3.500-4-3.500-4z" fill="#fff" stroke="#888"/>
    <path d="M695.500 15v-3l4-4 4 4v3z" fill="#fff" stroke="#888"/>`;
  document.getElementById("hruler").innerHTML = out;
}

function verticalRuler() {
  const zero = 95;
  let out = `<rect width="11" height="96" fill="#c6c6c6"/>
    <rect y="97" width="11" height="900" fill="#fff"/>`;
  quarterMarks(-2.100, 19, (pos, q) => {
    const y = Math.round(zero + pos);
    if (q % 4 === 0) out += `<text transform="translate(10 ${y}) rotate(-90)">${Math.abs(q / 4)}</text>`;
    else if (q % 2 === 0) out += `<path d="M5 ${y}.5h5" stroke="#444"/>`;
    else out += `<path d="M6 ${y}.5h2" stroke="#444"/>`;
  });
  document.getElementById("vruler").innerHTML = out;
}

horizontalRuler();
verticalRuler();
```
